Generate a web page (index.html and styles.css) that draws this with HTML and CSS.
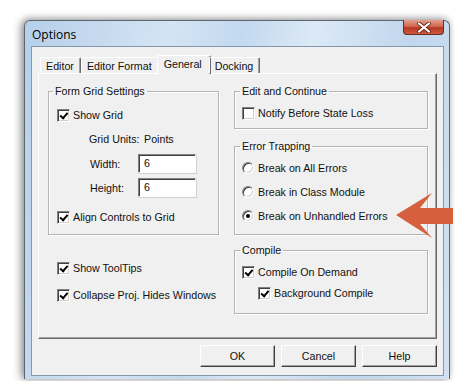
FILE: index.html
```html
<!DOCTYPE html>
<html lang="en">
<head>
    <meta charset="UTF-8">
    <title>Options</title>
    <link rel="stylesheet" href="styles.css">
</head>
<body>

  <div class="dialog">
    <div class="titlebar">
        <span class="title">Options</span>
        <span class="close">
            <svg width="16" height="11" viewBox="0 0 16 11">
                <path d="M3 1.5 L13 9.5 M13 1.5 L3 9.5" stroke="#6b2c22" stroke-width="4" stroke-linecap="round"/>
                <path d="M3 1.5 L13 9.5 M13 1.5 L3 9.5" stroke="#fff" stroke-width="2.2" stroke-linecap="round"/>
            </svg>
        </span>
    </div>

    <div class="client">
        <div class="tabs">
            <span class="tab">Editor</span>
            <span class="tab">Editor Format</span>
            <span class="tab active">General</span>
            <span class="tab">Docking</span>
        </div>

        <div class="page">
            <div class="col">
                <fieldset class="group grid-group">
                    <legend>Form Grid Settings</legend>
                    <div class="row first"><span class="check on"></span>Show Grid</div>
                    <div class="row units"><span class="units-label">Grid Units:</span>Points</div>
                    <div class="field"><span class="field-label">Width:</span><span class="input">6</span></div>
                    <div class="field second"><span class="field-label">Height:</span><span class="input">6</span></div>
                    <div class="row align"><span class="check on"></span>Align Controls to Grid</div>
                </fieldset>

                <div class="row loose tips"><span class="check on"></span>Show ToolTips</div>
                <div class="row loose"><span class="check on"></span>Collapse Proj. Hides Windows</div>
            </div>

            <div class="col">
                <fieldset class="group edit-group">
                    <legend>Edit and Continue</legend>
                    <div class="row first"><span class="check"></span>Notify Before State Loss</div>
                </fieldset>

                <fieldset class="group error-group">
                    <legend>Error Trapping</legend>
                    <div class="row first"><span class="radio"></span>Break on All Errors</div>
                    <div class="row"><span class="radio"></span>Break in Class Module</div>
                    <div class="row"><span class="radio on"></span>Break on Unhandled Errors</div>
                </fieldset>

                <fieldset class="group compile-group">
                    <legend>Compile</legend>
                    <div class="row demand"><span class="check on"></span>Compile On Demand</div>
                    <div class="row sub"><span class="check on"></span>Background Compile</div>
                </fieldset>
            </div>
        </div>

        <div class="buttons">
            <span class="btn">OK</span>
            <span class="btn">Cancel</span>
            <span class="btn">Help</span>
        </div>
    </div>
  </div>

  <!-- callout arrow drawn over the dialog -->
  <svg class="arrow" width="70" height="50" viewBox="0 0 70 50">
      <polygon points="10,24 46,2 34,17 67,17 67,33 34,33 46,47" fill="#d6603e"/>
  </svg>

</body>
</html>
```

FILE: styles.css
```css
html {
  font-size: 11px;
}

body {
    margin: 0;
    background: #fff;
    font-family: 'Liberation Sans', Arial, sans-serif;
    font-size: 10.7px;
    color: #111;
    position: relative;
    height: 381px;
    overflow: hidden;
}

.dialog {
    margin: 20px 0 0 24px;
    width: 426px;
    height: 359px;
    box-sizing: border-box;
    border: 1px solid #5b6673;
    border-bottom: none;
    border-radius: 6px 6px 0 0;
    background: linear-gradient(100deg, #b6cfe9 0%, #d4e4f4 30%, #c3d9ef 45%, #dce9f6 60%, #c0d6ed 80%, #d2e2f2 100%);
    box-shadow: -3px 0 8px rgba(0, 0, 0, 0.4), 0 -2px 6px rgba(0, 0, 0, 0.15);
    display: flex;
    flex-direction: column;
}

.titlebar {
    height: 25px;
    display: flex;
    justify-content: space-between;
    align-items: flex-start;
    padding-left: 7px;
}

.title {
    font-family: 'Open Sans', 'Noto Sans', sans-serif;
    font-size: 12px;
    margin-top: 5px;
    color: #000;
}

.close {
    width: 41px;
    height: 15px;
    margin-right: 5px;
    margin-top: -1px;
    box-sizing: border-box;
    border: 1px solid #6c2a22;
    border-top: none;
    border-radius: 0 0 4px 4px;
    background: linear-gradient(to bottom, #e3a08e 0%, #d06a53 45%, #b8371f 55%, #cc5a3e 100%);
    display: flex;
    justify-content: center;
    align-items: center;
}

.client {
    margin: 0 5px 0 6px;
    height: 330px;
    box-sizing: border-box;
    background: #f0f0f0;
    border: 1px solid #8497ad;
    padding: 8px 6px 0 6px;
}

.tabs {
    display: flex;
    height: 18px;
    padding-left: 2px;
    align-items: flex-end;
    position: relative;
    z-index: 1;
}

.tab {
    height: 16px;
    box-sizing: border-box;
    padding: 1px 6px 0 5px;
    border-left: 1px solid #fff;
    border-top: 1px solid #fff;
    border-right: 1px solid #696969;
    box-shadow: inset -1px 0 #a0a0a0;
    border-radius: 2px 2px 0 0;
    line-height: 14px;
}

.tab.active {
    height: 19px;
    margin: 0 -2px -1px -2px;
    padding: 1px 8px 0 6px;
    background: #f0f0f0;
}

.page {
    width: 399px;
    height: 266px;
    box-sizing: border-box;
    border-top: 1px solid #fff;
    border-left: 1px solid #fff;
    border-right: 1px solid #696969;
    border-bottom: 1px solid #696969;
    box-shadow: inset -1px -1px #a0a0a0;
    padding: 10px 0 0 9px;
    display: grid;
    grid-template-columns: 171px 194px;
    column-gap: 15px;
    align-items: start;
}

.group {
    margin: 0;
    padding: 0 7px;
    border: 1px solid #b3b3b3;
    box-shadow: 1px 1px #fff, inset 1px 1px #fff;
    min-width: 0;
}

.group legend {
    padding: 0 2px;
    margin-left: -2px;
    line-height: 14px;
}

.grid-group {
    padding: 0 8px 5px 8px;
}

.grid-group legend {
    margin-left: -4px;
}

.edit-group {
    padding-bottom: 3px;
}

.error-group {
    margin-top: 10px;
    padding-bottom: 6px;
}

.compile-group {
    margin-top: 8px;
    padding-bottom: 10px;
}

.row {
    display: flex;
    align-items: center;
    height: 24px;
    gap: 3px;
    white-space: nowrap;
}

.row.first {
    margin-top: 3px;
}

.grid-group .row.first {
    margin-top: 5px;
}

.row.units {
    padding-left: 32px;
    gap: 0;
}

.units-label {
    width: 55px;
}

.field {
    display: flex;
    align-items: center;
    height: 19px;
    margin-top: 3px;
    padding-left: 33px;
}

.field.second {
    margin-top: 5px;
}

.field-label {
    width: 48px;
}

.input {
    width: 58px;
    height: 19px;
    box-sizing: border-box;
    background: #fff;
    border-top: 1px solid #808080;
    border-left: 1px solid #808080;
    border-right: 1px solid #fff;
    border-bottom: 1px solid #fff;
    box-shadow: inset 1px 1px #404040, 1px 1px #d4d0c8;
    padding: 2px 0 0 5px;
}

.row.align {
    margin-top: 8px;
}

.row.loose {
    padding-left: 9px;
    margin-top: 3px;
}

.row.tips {
    margin-top: 21px;
}

.row.demand {
    margin-top: 4px;
    height: 22px;
}

.row.sub {
    height: 20px;
    padding-left: 16px;
}

.check {
    width: 13px;
    height: 13px;
    box-sizing: border-box;
    flex: none;
    background: #fff;
    border-top: 1px solid #808080;
    border-left: 1px solid #808080;
    border-right: 1px solid #fff;
    border-bottom: 1px solid #fff;
    box-shadow: inset 1px 1px #404040, inset -1px -1px #d4d0c8;
    position: relative;
}

.check.on::after {
    content: "";
    position: absolute;
    left: 2px;
    top: 1px;
    width: 3px;
    height: 6px;
    border-right: 2px solid #000;
    border-bottom: 2px solid #000;
    transform: rotate(40deg) translate(1px, -1px);
}

.radio {
    width: 12px;
    height: 12px;
    box-sizing: border-box;
    flex: none;
    border-radius: 50%;
    background: #fff;
    border: 1px solid;
    border-color: #808080 #fff #fff #808080;
    box-shadow: inset 1px 1px #404040, inset -1px -1px #d4d0c8;
    margin-right: 1px;
    position: relative;
}

.radio.on::after {
    content: "";
    position: absolute;
    left: 3px;
    top: 3px;
    width: 4px;
    height: 4px;
    border-radius: 50%;
    background: #000;
}

.buttons {
    display: flex;
    justify-content: flex-end;
    gap: 6px;
    margin-top: 6px;
    width: 399px;
}

.btn {
    width: 75px;
    height: 22px;
    box-sizing: border-box;
    display: flex;
    justify-content: center;
    align-items: center;
    border-top: 1px solid #fff;
    border-left: 1px solid #fff;
    border-right: 1px solid #404040;
    border-bottom: 1px solid #404040;
    box-shadow: inset -1px -1px #a0a0a0;
    background: #f0f0f0;
}

.arrow {
    position: absolute;
    left: 386px;
    top: 191px;
}
```
